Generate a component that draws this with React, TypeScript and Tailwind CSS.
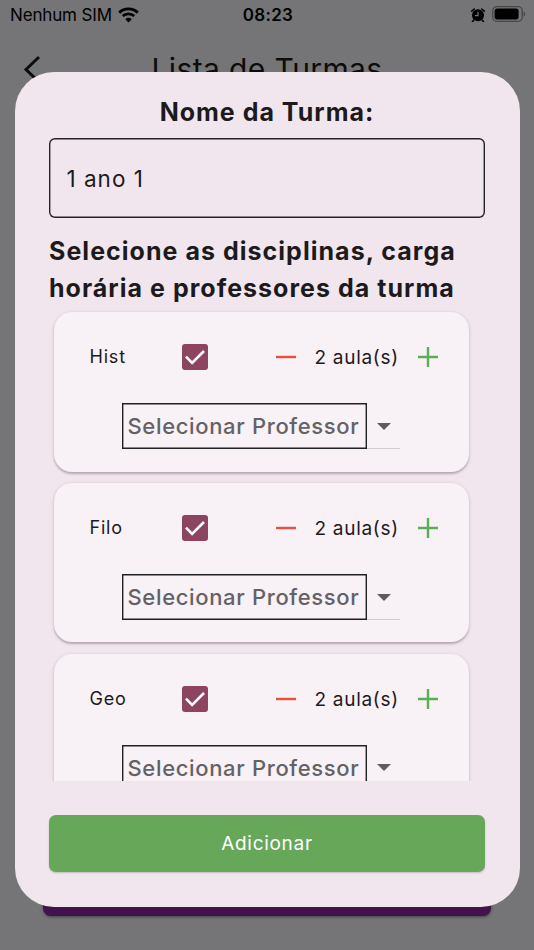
import React, { useState } from "react";

interface Subject {
  id: string;
  name: string;
  lessons: number;
  checked: boolean;
}

interface SubjectCardProps {
  subject: Subject;
  onToggle: () => void;
  onChangeLessons: (delta: number) => void;
}

const initialSubjects: Subject[] = [
  { id: "hist", name: "Hist", lessons: 2, checked: true },
  { id: "filo", name: "Filo", lessons: 2, checked: true },
  { id: "geo", name: "Geo", lessons: 2, checked: true },
];

const StatusBar = () => (
  <div className="grid h-[30px] grid-cols-3 items-center pl-[10px] pr-[8px] text-black">
    <div className="flex items-center gap-[6px]">
      <span className="w-[103px] whitespace-nowrap text-[17px] leading-none tracking-[-0.15px]">
        Nenhum SIM
      </span>
      <svg width="21" height="16" viewBox="0 0 21 16" className="-ml-px shrink-0" fill="none" stroke="black">
        <path d="M1.2 5.6a13.4 13.4 0 0 1 18.6 0" strokeWidth="2.9" />
        <path d="M4.7 9.1a8.4 8.4 0 0 1 11.6 0" strokeWidth="2.7" />
        <path d="M10.5 15.6 7.3 12.2a4.8 4.8 0 0 1 6.4 0z" fill="black" stroke="none" />
      </svg>
    </div>
    <span className="text-center text-[17px] font-semibold leading-none tracking-[0.3px]">
      08:23
    </span>
    <div className="flex items-center justify-end gap-[7px]">
      <svg width="14" height="14" viewBox="0 0 14 14" className="-mt-px">
        <circle cx="7" cy="7.3" r="6" fill="black" />
        <path d="M.8 3.1 3.2 1M13.2 3.1 10.8 1M2.7 12.3l-1.2 1.3M11.3 12.3l1.2 1.3" stroke="black" strokeWidth="1.6" strokeLinecap="round" />
        <path d="M7 3.7v4H4" stroke="#757577" strokeWidth="1.2" fill="none" />
      </svg>
      <svg width="34" height="16" viewBox="0 0 34 16" className="-mt-[2px]">
        <rect x=".7" y=".7" width="29.6" height="14.6" rx="4.2" fill="none" stroke="#474748" strokeWidth="1.3" />
        <rect x="2.6" y="2.6" width="24" height="10.8" rx="2.6" fill="black" />
        <path d="M31.7 5.4c1.9.7 1.9 4.5 0 5.2z" fill="#474748" />
      </svg>
    </div>
  </div>
);

const SubjectCard = ({ subject, onToggle, onChangeLessons }: SubjectCardProps) => {
  return (
    <div className="h-[159.5px] shrink-0 rounded-[18px] bg-[#f8f1f6] pt-[25.4px] shadow-[0_1.5px_2px_rgba(60,30,50,0.26),0_1px_4px_rgba(60,30,50,0.1)]">
      <div className="flex h-10 items-center pl-[35.5px]">
        <p className="w-[92.5px] text-[18px] leading-none tracking-[0.8px]">{subject.name}</p>
        <button
          onClick={onToggle}
          className="flex size-[26px] items-center justify-center rounded-[3px] bg-[#8c4460]"
        >
          {subject.checked && (
            <svg width="26" height="26" viewBox="0 0 26 26" fill="none">
              <path d="m4 12.7 6.1 6.1L22 7" stroke="white" strokeWidth="2.6" />
            </svg>
          )}
        </button>
        <button onClick={() => onChangeLessons(-1)} className="ml-[68px]">
          <svg width="20" height="20" viewBox="0 0 20 20" className="block">
            <path d="M0 10h20" stroke="#e94f3d" strokeWidth="2.4" />
          </svg>
        </button>
        <span className="ml-[18.5px] w-[103.5px] whitespace-nowrap text-[19px] leading-none tracking-[0.7px]">
          {subject.lessons} aula(s)
        </span>
        <button onClick={() => onChangeLessons(1)}>
          <svg width="20" height="20" viewBox="0 0 20 20" className="block">
            <path d="M0 10h20M10 0v20" stroke="#5aae55" strokeWidth="2.4" />
          </svg>
        </button>
      </div>
      <button className="ml-[68px] mt-[26px] flex h-[45.5px] w-[278px] items-center border-b border-[#d3ccd1]">
        <span className="-mb-px flex h-[45.5px] w-[245px] items-center whitespace-nowrap pl-[5.5px] text-[22px] font-medium leading-none tracking-[0.65px] text-[#646265] shadow-[inset_0_0_0_1.4px_#202123]">
          Selecionar Professor
        </span>
        <svg width="14" height="7" viewBox="0 0 14 7" className="ml-[10px] mt-px">
          <path d="M0 0h14L7 7z" fill="#5f5c60" />
        </svg>
      </button>
    </div>
  );
};

const App = () => {
  const [name, setName] = useState("1 ano 1");
  const [subjects, setSubjects] = useState(initialSubjects);

  const updateSubject = (id: string, changes: Partial<Subject>) => {
    setSubjects(subjects.map((s) => (s.id === id ? { ...s, ...changes } : s)));
  };

  return (
    <div className="relative h-[950px] w-[534px] overflow-hidden bg-[#757577] font-['Inter','Liberation_Sans',sans-serif] text-[#1d1a1d]">
      {/* page behind the dialog */}
      <div className="flex h-full flex-col">
        <StatusBar />
        <header className="flex h-[77px] items-center justify-center text-[#0c0c0c]">
          <svg width="18" height="28" viewBox="0 0 18 28" fill="none" className="-ml-[128px] mr-[110px]">
            <path d="M16 2 3 14.5 16 27" stroke="#0c0c0c" strokeWidth="3" />
          </svg>
          <h1 className="whitespace-nowrap text-[30px] leading-none tracking-[0.4px]">
            Lista de Turmas
          </h1>
        </header>
        <div className="mx-[43px] mb-[34.5px] mt-auto h-[56px] rounded-[8px] bg-[#43114e] shadow-[0_1px_3px_rgba(0,0,0,0.45)]" />
      </div>

      {/* dialog */}
      <div className="absolute left-[14.5px] top-[71.5px] flex h-[835.5px] w-[505px] flex-col rounded-[39px] bg-[#f1e6ed] px-[34.5px]">
        <h2 className="mt-[22.5px] whitespace-nowrap text-center text-[25px] font-bold leading-[37px] tracking-[1px]">
          Nome da Turma:
        </h2>
        <input
          value={name}
          onChange={(e) => setName(e.target.value)}
          className="mt-[7px] h-[80px] w-full shrink-0 rounded-[6px] bg-transparent px-[17.5px] pt-px text-[22.5px] tracking-[1px] shadow-[inset_0_0_0_1.4px_#242326] outline-none"
        />
        <p className="mt-[14.5px] whitespace-nowrap text-[25px] font-bold leading-[37px] tracking-[1.03px]">
          Selecione as disciplinas, carga
          <br />
          horária e professores da turma
        </p>
        <div className="-mx-[2px] mt-[1.5px] flex h-[473px] shrink-0 flex-col gap-[11.4px] overflow-hidden pl-[7px] pr-[18.5px] pt-[4px]">
          {subjects.map((subject) => (
            <SubjectCard
              key={subject.id}
              subject={subject}
              onToggle={() => updateSubject(subject.id, { checked: !subject.checked })}
              onChangeLessons={(delta) =>
                updateSubject(subject.id, { lessons: Math.max(0, subject.lessons + delta) })
              }
            />
          ))}
        </div>
        <button className="mb-[35px] mt-auto h-[57px] shrink-0 rounded-[7px] bg-[#66a75a] pt-[2px] text-[19px] tracking-[0.7px] text-white shadow-[0_1px_2px_rgba(0,0,0,0.2)]">
          Adicionar
        </button>
      </div>
    </div>
  );
};

export default App;
